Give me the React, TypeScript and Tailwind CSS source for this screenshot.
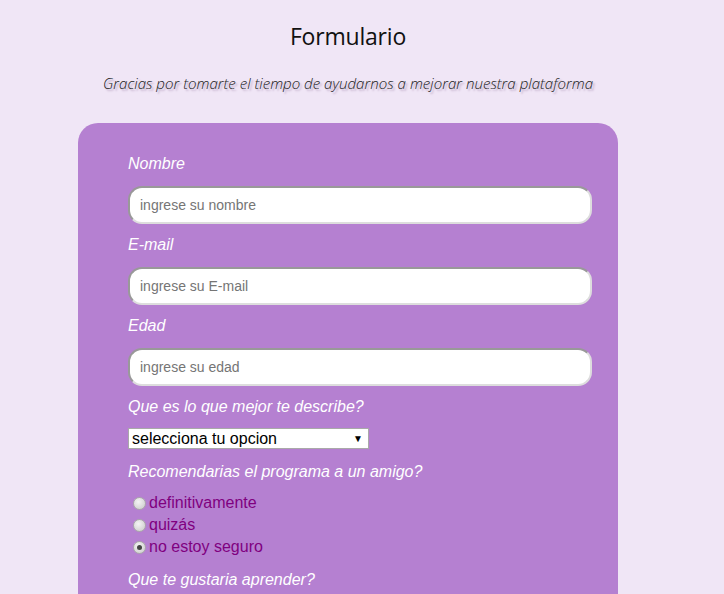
import { useState } from 'react';

const fields = [
  { label: 'Nombre', placeholder: 'ingrese su nombre' },
  { label: 'E-mail', placeholder: 'ingrese su E-mail' },
  { label: 'Edad', placeholder: 'ingrese su edad' },
];

const options = ['definitivamente', 'quizás', 'no estoy seguro'];

const App = () => {
  const [choice, setChoice] = useState('no estoy seguro');

  return (
    <div className="min-h-[594px] bg-[#f0e6f6] font-['Liberation_Sans',Arial,sans-serif]">
      <div className="w-[696px] flex flex-col items-center">
        <h1 className="mt-[20px] text-[23px] leading-[32px] text-[#111] font-['Open_Sans',sans-serif] tracking-[-0.2px]">
          Formulario
        </h1>
        <p className="mt-[21px] text-[15.1px] leading-[20px] italic font-light text-[#222] font-['Open_Sans',sans-serif] [text-shadow:2px_2px_2px_#b9a4c2]">
          Gracias por tomarte el tiempo de ayudarnos a mejorar nuestra plataforma
        </p>

        <form className="mt-[30px] w-[540px] rounded-[20px] bg-[#b580d1] pl-[50px] pr-[26px] pt-[31px] pb-10 flex flex-col">
          {fields.map((f) => (
            <div key={f.label} className="flex flex-col">
              <label className="text-[16px] leading-[20px] italic text-white">{f.label}</label>
              <input
                type="text"
                placeholder={f.placeholder}
                className="mt-[12px] mb-[11px] h-[38px] w-[464px] rounded-[14px] bg-white border-2 border-t-[#999] border-l-[#999] border-b-[#ddd] border-r-[#ddd] px-[10px] text-[14px] text-black placeholder:text-[#757575] outline-none"
              />
            </div>
          ))}

          <label className="text-[16px] leading-[20px] italic text-white">
            Que es lo que mejor te describe?
          </label>
          <div className="mt-[11px] relative w-[241px] h-[21px] bg-white border border-[#a9a9a9] flex items-center">
            <span className="pl-[3px] text-[16px] leading-[18px] text-black">selecciona tu opcion</span>
            <span className="absolute right-[5px] top-[3px] text-[10px] leading-[14px] text-black">▼</span>
          </div>

          <label className="mt-[13px] text-[16px] leading-[20px] italic text-white">
            Recomendarias el programa a un amigo?
          </label>
          <div className="mt-[10px] flex flex-col">
            {options.map((o) => (
              <label
                key={o}
                className="flex items-center h-[22px] cursor-pointer"
                onClick={() => setChoice(o)}
              >
                <span className="ml-[5px] mr-[3px] w-[13px] h-[13px] rounded-full border border-[#aaa] bg-[radial-gradient(circle_at_40%_35%,#f4f4f4,#c8c8c8)] flex items-center justify-center">
                  {choice === o && <span className="w-[5px] h-[5px] rounded-full bg-[#444]" />}
                </span>
                <span className="text-[16px] leading-[20px] text-[#800080]">{o}</span>
              </label>
            ))}
          </div>

          <label className="mt-[12px] text-[16px] leading-[20px] italic text-white">
            Que te gustaria aprender?
          </label>
        </form>
      </div>
    </div>
  );
};

export default App;
